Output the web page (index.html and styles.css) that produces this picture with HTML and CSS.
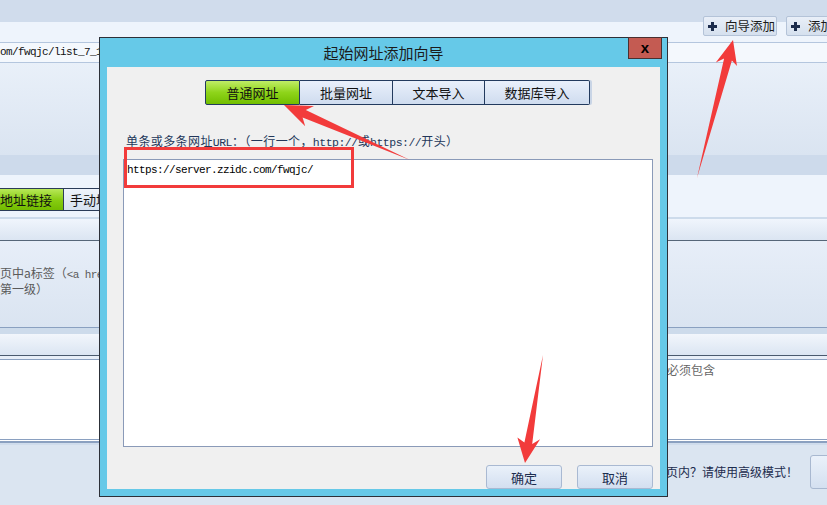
FILE: index.html
```html
<!DOCTYPE html>
<html lang="zh-CN">
<head>
    <meta charset="UTF-8">
    <meta name="viewport" content="width=device-width, initial-scale=1.0">
    <title>起始网址添加向导</title>
    <link rel="stylesheet" href="styles.css">
</head>
<body>
    <!-- Fenêtre principale (arrière-plan) -->
    <div class="app">
        <div class="app-top">
            <button class="tool-btn">
                <svg class="plus" width="9" height="9" viewBox="0 0 9 9"><path d="M3 0h3v3h3v3H6v3H3V6H0V3h3z"/></svg>
                <span>向导添加</span>
            </button>
            <button class="tool-btn wide">
                <svg class="plus" width="9" height="9" viewBox="0 0 9 9"><path d="M3 0h3v3h3v3H6v3H3V6H0V3h3z"/></svg>
                <span>添加</span>
            </button>
        </div>
        <div class="url-row">om/fwqjc/list_7_1.html</div>
        <div class="panel"></div>
        <div class="band"></div>
        <div class="spacer"></div>
        <div class="rule-tabs">
            <span class="rule-tab active">地址链接</span>
            <span class="rule-tab">手动填写</span>
        </div>
        <div class="spacer small"></div>
        <div class="bar"></div>
        <div class="hint">
            <p>页中a标签（<span class="mono">&lt;a href</span>）</p>
            <p>第一级）</p>
        </div>
        <div class="bar second"></div>
        <div class="list-wrap">
            <div class="list-box"><span class="muted">必须包含</span></div>
        </div>
        <div class="footer">
            <span class="footer-text">列表页内？请使用高级模式！</span>
            <button class="footer-btn"></button>
        </div>
    </div>

    <!-- Boîte de dialogue -->
    <div class="dialog">
        <div class="dialog-title">起始网址添加向导</div>
        <button class="dialog-close">x</button>
        <div class="dialog-body">
            <div class="wiz-tabs">
                <span class="wiz-tab active">普通网址</span>
                <span class="wiz-tab">批量网址</span>
                <span class="wiz-tab">文本导入</span>
                <span class="wiz-tab last">数据库导入</span>
            </div>
            <div class="url-label">单条或多条网址<span class="mono">URL</span>：（一行一个，<span class="mono">http://</span>或<span class="mono">https://</span>开头）</div>
            <div class="url-input">https://server.zzidc.com/fwqjc/</div>
            <div class="dialog-actions">
                <button class="dlg-btn">确定</button>
                <button class="dlg-btn">取消</button>
            </div>
        </div>
    </div>

    <!-- Annotations rouges -->
    <svg class="marks" width="827" height="505" viewBox="0 0 827 505">
        <rect x="125.5" y="148.5" width="227" height="38" fill="none" stroke="#f23b3b" stroke-width="3"/>
        <polygon fill="#f23b3b" points="284,105 305.2,126.3 302.6,117.5 410,160 305.8,110.1 314,106.1"/>
        <polygon fill="#f23b3b" points="733,40 715.8,62.4 724.1,58.4 697,178 731.9,60.4 737,66"/>
        <polygon fill="#f23b3b" points="525,463 540.1,439.2 532.2,443.9 543,355 524.4,442.6 517.4,437.6"/>
    </svg>
</body>
</html>
```

FILE: styles.css
```css
* {
    margin: 0;
    padding: 0;
    box-sizing: border-box;
}

body {
    width: 827px;
    height: 505px;
    overflow: hidden;
    position: relative;
    background-color: #dbe5f1;
    font-family: "Noto Sans CJK SC", "Liberation Sans", sans-serif;
    font-size: 12px;
    color: #111;
}

.mono {
    font-family: "Liberation Mono", "Noto Sans CJK SC", monospace;
    font-size: 11px;
    letter-spacing: -0.6px;
}

/* ---- fenêtre principale ---- */

.app-top {
    height: 42px;
    display: flex;
    gap: 9px;
    padding: 16px 0 0 703px;
    overflow: hidden;
    background: linear-gradient(#d0dcec 0, #d0dcec 22px, #eef4fc 22px);
}

.tool-btn {
    flex-shrink: 0;
    width: 74px;
    height: 20px;
    display: flex;
    align-items: center;
    gap: 8px;
    padding-left: 4px;
    border: 1px solid #b4c3d8;
    border-radius: 2px;
    background: linear-gradient(#e9eff8, #d5e0ee);
    font-family: inherit;
    font-size: 12.5px;
    line-height: 18px;
    color: #1a1a1a;
    white-space: nowrap;
}

.tool-btn.wide {
    width: 52px;
}

.plus {
    fill: #1c2c4c;
    flex-shrink: 0;
}

.url-row {
    height: 21px;
    border-top: 1px solid #b4c6de;
    border-bottom: 1px solid #b4c6de;
    background-color: #f4f8fd;
    font-family: "Liberation Mono", monospace;
    font-size: 11px;
    letter-spacing: -0.6px;
    line-height: 19px;
    color: #111;
    white-space: nowrap;
}

.panel {
    height: 92px;
    background: linear-gradient(#e9f0f9, #dae4f1);
}

.band {
    height: 20px;
    background-color: #cddaeb;
}

.spacer {
    height: 13px;
    background-color: #eef4fc;
}

.spacer.small {
    height: 6px;
}

.rule-tabs {
    height: 23px;
    display: flex;
    background-color: #eef4fc;
}

.rule-tab {
    width: 60px;
    height: 23px;
    border: 1px solid #2b3c58;
    border-left: none;
    background: linear-gradient(#eef3fb, #d6e2f0);
    font-size: 13px;
    line-height: 21px;
    padding-left: 6px;
    white-space: nowrap;
    overflow: hidden;
}

.rule-tab.active {
    width: 64px;
    padding-left: 0;
    background: linear-gradient(#b8e858, #86cc10 55%, #72bc00);
}

.bar {
    height: 24px;
    border-top: 2px solid #cddbeb;
    border-bottom: 1px solid #566678;
    background: linear-gradient(#f0f5fc, #dbe5f2);
}

.hint {
    height: 86px;
    padding-top: 25px;
    background: linear-gradient(#e7eef8, #dae4f1);
    color: #5a5a5a;
    line-height: 14px;
    white-space: nowrap;
}

.bar.second {
    height: 29px;
    border-top: 1px solid #8aa0c0;
    border-bottom: 1px solid #4a5a6e;
    background: linear-gradient(#cddbeb 0, #cddbeb 6px, #f2f6fc 6px, #dbe5f2);
}

.list-wrap {
    padding-top: 3px;
    border-bottom: 1px solid #8aa0c0;
    background-color: #e7eef8;
}

.list-box {
    height: 83px;
    border-top: 1px solid #8aa0c0;
    border-bottom: 3px double #8aa0c0;
    background-color: #fff;
    padding: 1px 0 0 667px;
    white-space: nowrap;
}

.muted {
    color: #666;
}

.footer {
    height: 62px;
    display: flex;
    justify-content: flex-end;
    align-items: flex-start;
    gap: 12px;
    padding-top: 12px;
    background: linear-gradient(#cfdcec 0, #cfdcec 2px, #dbe5f1 2px);
}

.footer-text {
    font-size: 12px;
    line-height: 34px;
    color: #1c2c4e;
    white-space: nowrap;
}

.footer-btn {
    width: 40px;
    height: 34px;
    margin-right: -23px;
    border: 1px solid #a8b8d0;
    border-radius: 3px;
    background: linear-gradient(#eaf1fa, #d4e0f0);
}

/* ---- boîte de dialogue ---- */

.dialog {
    position: absolute;
    left: 99px;
    top: 37px;
    width: 569px;
    height: 460px;
    border: 1px solid #2c3038;
    background-color: #66c9e8;
    padding: 0 7px 7px;
}

.dialog-title {
    height: 29px;
    text-align: center;
    font-size: 15px;
    line-height: 29px;
    color: #1b1b1b;
}

.dialog-close {
    position: absolute;
    left: 528px;
    top: -1px;
    width: 34px;
    height: 22px;
    border: 1px solid #4a3030;
    background-color: #c45b52;
    font-family: "Liberation Sans", sans-serif;
    font-weight: bold;
    font-size: 15px;
    line-height: 16px;
    color: #000;
}

.dialog-body {
    height: 422px;
    background-color: #f0f0f0;
    display: flex;
    flex-direction: column;
    padding: 13px 7px 0 16px;
}

.wiz-tabs {
    display: flex;
    margin-left: 82px;
}

.wiz-tab {
    width: 93px;
    height: 25px;
    border: 1px solid #223a5e;
    border-left: none;
    background: linear-gradient(#e9f0fb, #cfdcef);
    text-align: center;
    font-size: 13px;
    line-height: 23px;
    color: #111;
}

.wiz-tab.active {
    width: 95px;
    border-left: 1px solid #223a5e;
    border-radius: 2px 0 0 2px;
    background: linear-gradient(#c0ec66, #8ed41a 50%, #72be00);
}

.wiz-tab:nth-child(3) {
    width: 92px;
}

.wiz-tab.last {
    width: 105px;
    border-radius: 0 2px 2px 0;
    box-shadow: 2px 0 0 #c9d5e6;
}

.url-label {
    margin-top: 29px;
    padding-left: 3px;
    line-height: 14px;
    letter-spacing: 0.4px;
    color: #23375a;
    white-space: nowrap;
}

.url-label .mono {
    font-size: 11.5px;
    letter-spacing: -0.5px;
}

.url-input {
    margin-top: 9px;
    height: 288px;
    border: 1px solid #8a9ab8;
    background-color: #fff;
    padding: 3px 3px;
    font-family: "Liberation Mono", monospace;
    font-size: 11px;
    letter-spacing: -0.6px;
    line-height: 14px;
    color: #000;
}

.dialog-actions {
    display: flex;
    justify-content: flex-end;
    gap: 15px;
    margin-top: 18px;
}

.dlg-btn {
    width: 76px;
    height: 24px;
    border: 1px solid #a9b9d2;
    border-radius: 3px;
    background: linear-gradient(#eaf1fa, #d3dff0);
    font-family: inherit;
    font-size: 13px;
    color: #1c2c4e;
}

/* ---- annotations ---- */

.marks {
    position: absolute;
    left: 0;
    top: 0;
    pointer-events: none;
}
```
